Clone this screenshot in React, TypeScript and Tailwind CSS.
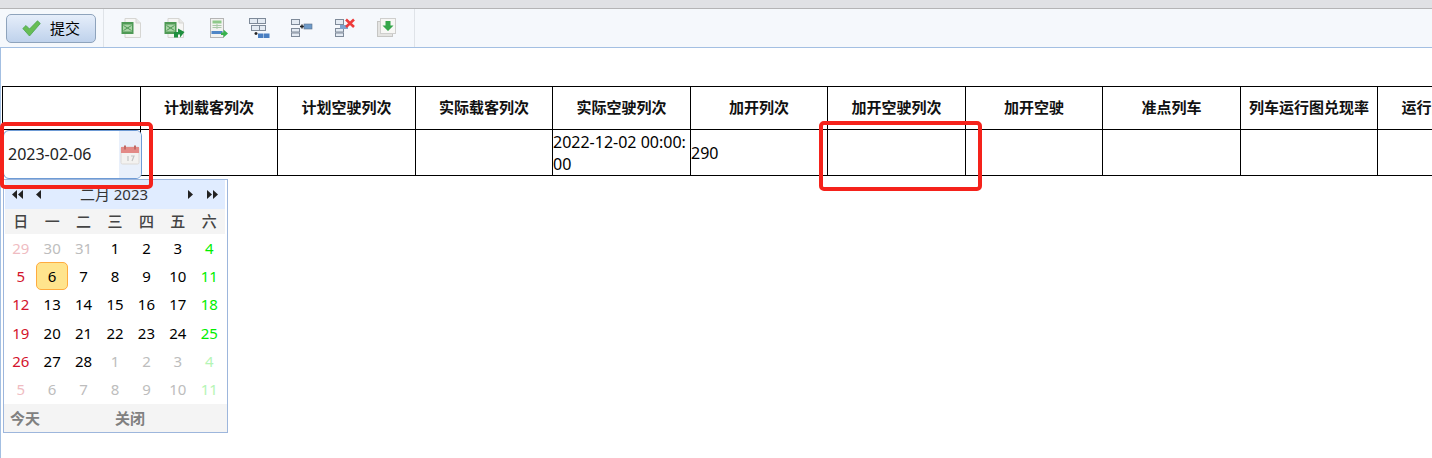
import React from "react";

const font = { fontFamily: '"Noto Sans", "Noto Sans CJK SC", sans-serif' };

const headers = ["", "计划载客列次", "计划空驶列次", "实际载客列次", "实际空驶列次", "加开列次", "加开空驶列次", "加开空驶", "准点列车", "列车运行图兑现率", "运行图兑现率"];
const widths = ["w-[138px]", "w-[137px]", "w-[138px]", "w-[137px]", "w-[138px]", "w-[137px]", "w-[138px]", "w-[137px]", "w-[138px]", "w-[137px]", "w-[138px]"];

type Day = { d: number; c: string; sel?: boolean };
const black = "text-black";
const out = "text-[#bdbdbd]";
const red = "text-[#d3122c]";
const green = "text-[#00ee00]";
const redL = "text-[#efbcc2]";
const greenL = "text-[#b5f5b5]";
const row = (arr: number[], cls: string[], sel?: number): Day[] => arr.map((d, i) => ({ d, c: cls[i], sel: sel === i }));
const weeks: Day[][] = [
  row([29, 30, 31, 1, 2, 3, 4], [redL, out, out, black, black, black, green]),
  row([5, 6, 7, 8, 9, 10, 11], [red, black, black, black, black, black, green], 1),
  row([12, 13, 14, 15, 16, 17, 18], [red, black, black, black, black, black, green]),
  row([19, 20, 21, 22, 23, 24, 25], [red, black, black, black, black, black, green]),
  row([26, 27, 28, 1, 2, 3, 4], [red, black, black, out, out, out, greenL]),
  row([5, 6, 7, 8, 9, 10, 11], [redL, out, out, out, out, out, greenL]),
];

function Check() {
  return (
    <svg width="19" height="17" viewBox="0 0 19 17">
      <path d="M0.8 8.5 L4 5.5 L7.5 9 L15.5 0.8 L18.3 3.5 L7.5 16 Z" fill="#67bd55" stroke="#4aa552" strokeWidth="0.8" />
    </svg>
  );
}

function Sheet({ arrow }: { arrow?: boolean }) {
  return (
    <svg width="22" height="22" viewBox="0 0 22 22">
      <path d="M5 1.5 H16 L20.5 6 V20.5 H5 Z" fill="#f6f6f4" stroke="#d6d6d3" />
      <path d="M16 1.5 V6 H20.5" fill="#e8e8e6" stroke="#d6d6d3" />
      <rect x="1.5" y="5" width="12" height="12" fill="#4f9a55" />
      <rect x="3" y="7.5" width="9" height="7" fill="#a9d4a6" />
      <path d="M3.5 13.5 L11.5 8.5 M3.5 8.5 L11.5 13.5" stroke="#4f9a55" strokeWidth="1" />
      {arrow && <path d="M11 20.5 L11 15 L15 15 V11.5 L21.5 15 L17 20.5 V17.5 L15 17.5 V20.5 Z" fill="#1f8f3f" />}
    </svg>
  );
}

function Form() {
  return (
    <svg width="22" height="22" viewBox="0 0 22 22">
      <rect x="2.5" y="1.5" width="13" height="19" fill="#f2f2f0" stroke="#b5b5b5" />
      <rect x="4.5" y="3.5" width="9" height="3" fill="#8fc98a" />
      <path d="M4.5 8.5 H13.5 M4.5 10.5 H13.5 M9 7 V12" stroke="#a9c9a8" />
      <rect x="3.5" y="14" width="11" height="3" fill="#4f86c6" />
      <path d="M13 15.5 H15.5 V12.5 L20 16.5 L15.5 20.5 V18 H13 Z" fill="#37b24d" />
    </svg>
  );
}

function Box({ x, y, w = 8, h = 5, fill = "#e4ebf3", stroke = "#7e8a99" }: { x: number; y: number; w?: number; h?: number; fill?: string; stroke?: string }) {
  return <rect x={x} y={y} width={w} height={h} fill={fill} stroke={stroke} strokeWidth="1" />;
}

function Tree1() {
  return (
    <svg width="22" height="22" viewBox="0 0 22 22">
      <Box x={1.5} y={1.5} /><Box x={9.5} y={1.5} />
      <Box x={3.5} y={8.5} /><Box x={11.5} y={8.5} w={6} />
      <path d="M8 15 V18 M6.5 16.5 H9.5" stroke="#222" strokeWidth="1.4" />
      <rect x="10" y="16.5" width="5.5" height="4.5" fill="#4a7fc1" />
      <rect x="16" y="16.5" width="5.5" height="4.5" fill="#4a7fc1" />
    </svg>
  );
}

function Tree2({ del }: { del?: boolean }) {
  return (
    <svg width="24" height="22" viewBox="0 0 24 22">
      <Box x={2.5} y={2.5} />
      <Box x={2.5} y={11.5} h={3.5} />
      <Box x={2.5} y={16} h={3.5} />
      {del ? (
        <>
          <rect x="7" y="8" width="8" height="4" fill="#7ca3cf" />
          <path d="M13 2.5 L21 10 M21 2.5 L13 10" stroke="#ee3a3a" strokeWidth="2.6" />
        </>
      ) : (
        <>
          <path d="M11 9.5 H16 M13 7.5 V11.5" stroke="#222" strokeWidth="1.4" />
          <rect x="15" y="7" width="8" height="5" fill="#6d9ac9" stroke="#5b6f88" strokeWidth="0.6" />
        </>
      )}
    </svg>
  );
}

function Download() {
  return (
    <svg width="22" height="22" viewBox="0 0 22 22">
      <rect x="1.5" y="4.5" width="15" height="15" fill="#e4e4e2" stroke="#c6c6c4" />
      <rect x="4.5" y="1.5" width="15" height="15" fill="#f7f7f5" stroke="#cfcfcd" />
      <path d="M9.5 4 H14.5 V8.5 H17.5 L12 14 L6.5 8.5 H9.5 Z" fill="#35a64a" />
    </svg>
  );
}

function CalendarIcon() {
  return (
    <svg width="20" height="20" viewBox="0 0 20 20">
      <rect x="1" y="2" width="18" height="17" rx="1.5" fill="#f3f2f0" stroke="#dcd9d6" />
      <rect x="1" y="2" width="18" height="6" fill="#e38a86" />
      <rect x="4" y="0.5" width="2" height="4" fill="#c06a66" />
      <rect x="14" y="0.5" width="2" height="4" fill="#c06a66" />
      <path d="M8 11 V16 M11 11 H14 L12 16" stroke="#c4c4c4" strokeWidth="1.2" fill="none" />
    </svg>
  );
}

function Tri({ dir, double }: { dir: "l" | "r"; double?: boolean }) {
  const one = dir === "l" ? "M5 0 V9 L0 4.5 Z" : "M0 0 V9 L5 4.5 Z";
  return (
    <svg width={double ? 12 : 6} height="9" viewBox={double ? "0 0 12 9" : "0 0 6 9"}>
      <path d={one} fill="#222" />
      {double && <path d={one} fill="#222" transform="translate(6 0)" />}
    </svg>
  );
}

export default function App() {
  return (
    <div className="relative flex h-[458px] w-[1432px] flex-col overflow-hidden bg-white text-black" style={font}>
      <div className="h-[9px] shrink-0 border-b border-[#b4b4b6] bg-[#e0e1e5]" />
      <div className="flex h-[38px] shrink-0 items-center bg-[#f5f8fc]">
        <div className="flex h-full w-[104px] items-center border-r border-[#dfe3e8] pl-[6px]">
          <button className="flex h-[29px] w-[90px] items-center rounded-[5px] border border-[#8ea3bc] bg-gradient-to-b from-[#e6eefa] to-[#bfd2ec] pl-[15px] text-[15px]">
            <Check />
            <span className="ml-[9px]">提交</span>
          </button>
        </div>
        <div className="flex h-full w-[311px] items-center border-r border-[#dfe3e8] pl-[16px]">
          <span className="w-[43px]"><Sheet /></span>
          <span className="w-[45px]"><Sheet arrow /></span>
          <span className="w-[40px]"><Form /></span>
          <span className="w-[41px]"><Tree1 /></span>
          <span className="w-[44px]"><Tree2 /></span>
          <span className="w-[43px]"><Tree2 del /></span>
          <span className="w-[22px]"><Download /></span>
        </div>
      </div>

      <div className="flex-1 overflow-hidden border-l border-t border-[#a3bfe2] pl-[1px] pt-[38px]">
        <table className="w-[1513px] table-fixed border-collapse text-[16px] leading-[22px]">
          <colgroup>
            {widths.map((w, i) => <col key={i} className={w} />)}
          </colgroup>
          <thead>
            <tr className="h-[43px]">
              {headers.map((h, i) => (
                <th key={i} className="border border-black p-0 pb-[2px] text-center text-[15px] font-bold text-[#111]">{h}</th>
              ))}
            </tr>
          </thead>
          <tbody>
            <tr className="h-[46px]">
              {headers.map((_, i) => (
                <td key={i} className="break-all border border-black p-0 align-middle text-[16px]">
                  {i === 4 ? "2022-12-02 00:00:00" : i === 5 ? "290" : ""}
                </td>
              ))}
            </tr>
          </tbody>
        </table>
      </div>

      {/* date input over the first cell */}
      <div className="absolute left-[3px] top-[130px] flex h-[49px] w-[139px] overflow-hidden rounded-[6px] border border-[#6e9bd5] bg-white">
        <div className="flex flex-1 items-center pb-[1px] pl-[4px] text-[16px] text-[#222]">2023-02-06</div>
        <div className="flex w-[22px] items-center justify-center bg-[#e9f0fb]"><CalendarIcon /></div>
      </div>

      {/* calendar popup */}
      <div className="absolute left-[3px] top-[179px] w-[225px] border border-[#9db6dc] bg-white">
        <div className="ml-[1px] mr-[2px] flex h-[29px] items-center bg-[#e0ecff]">
          <span className="ml-[7px] flex w-[24px]"><Tri dir="l" double /></span>
          <span className="flex w-[6px]"><Tri dir="l" /></span>
          <span className="flex-1 pr-[2px] text-center text-[15px] text-[#333]">二月 2023</span>
          <span className="flex w-[19px]"><Tri dir="r" /></span>
          <span className="mr-[6px] flex w-[12px]"><Tri dir="r" double /></span>
        </div>
        <div className="ml-[1px] mr-[2px] grid h-[25px] grid-cols-7 items-center bg-[#f4f4f4] text-center text-[15px] font-medium text-[#444]">
          {["日", "一", "二", "三", "四", "五", "六"].map((d) => <span key={d}>{d}</span>)}
        </div>
        <div className="ml-[1px] mr-[2px]">
          {weeks.map((w, i) => (
            <div key={i} className="grid h-[28.3px] grid-cols-7 items-center text-center text-[15px]">
              {w.map((day, j) => (
                <span
                  key={j}
                  className={`${day.c} ${day.sel ? "flex h-[28px] items-center justify-center rounded-[5px] border border-[#ffab3f] bg-[#ffe48d]" : ""}`}
                >
                  {day.d}
                </span>
              ))}
            </div>
          ))}
        </div>
        <div className="flex h-[28px] items-center bg-[#f4f4f4] text-[15px] font-bold text-[#808080]">
          <span className="ml-[6px] w-[105px]">今天</span>
          <span>关闭</span>
        </div>
      </div>

      {/* red annotation boxes */}
      <div className="pointer-events-none absolute left-[0px] top-[122px] h-[67px] w-[153px] rounded-[5px] border-[4px] border-[#f5221b]" />
      <div className="pointer-events-none absolute left-[819px] top-[121px] h-[70px] w-[163px] rounded-[5px] border-[4px] border-[#f5221b]" />
    </div>
  );
}
